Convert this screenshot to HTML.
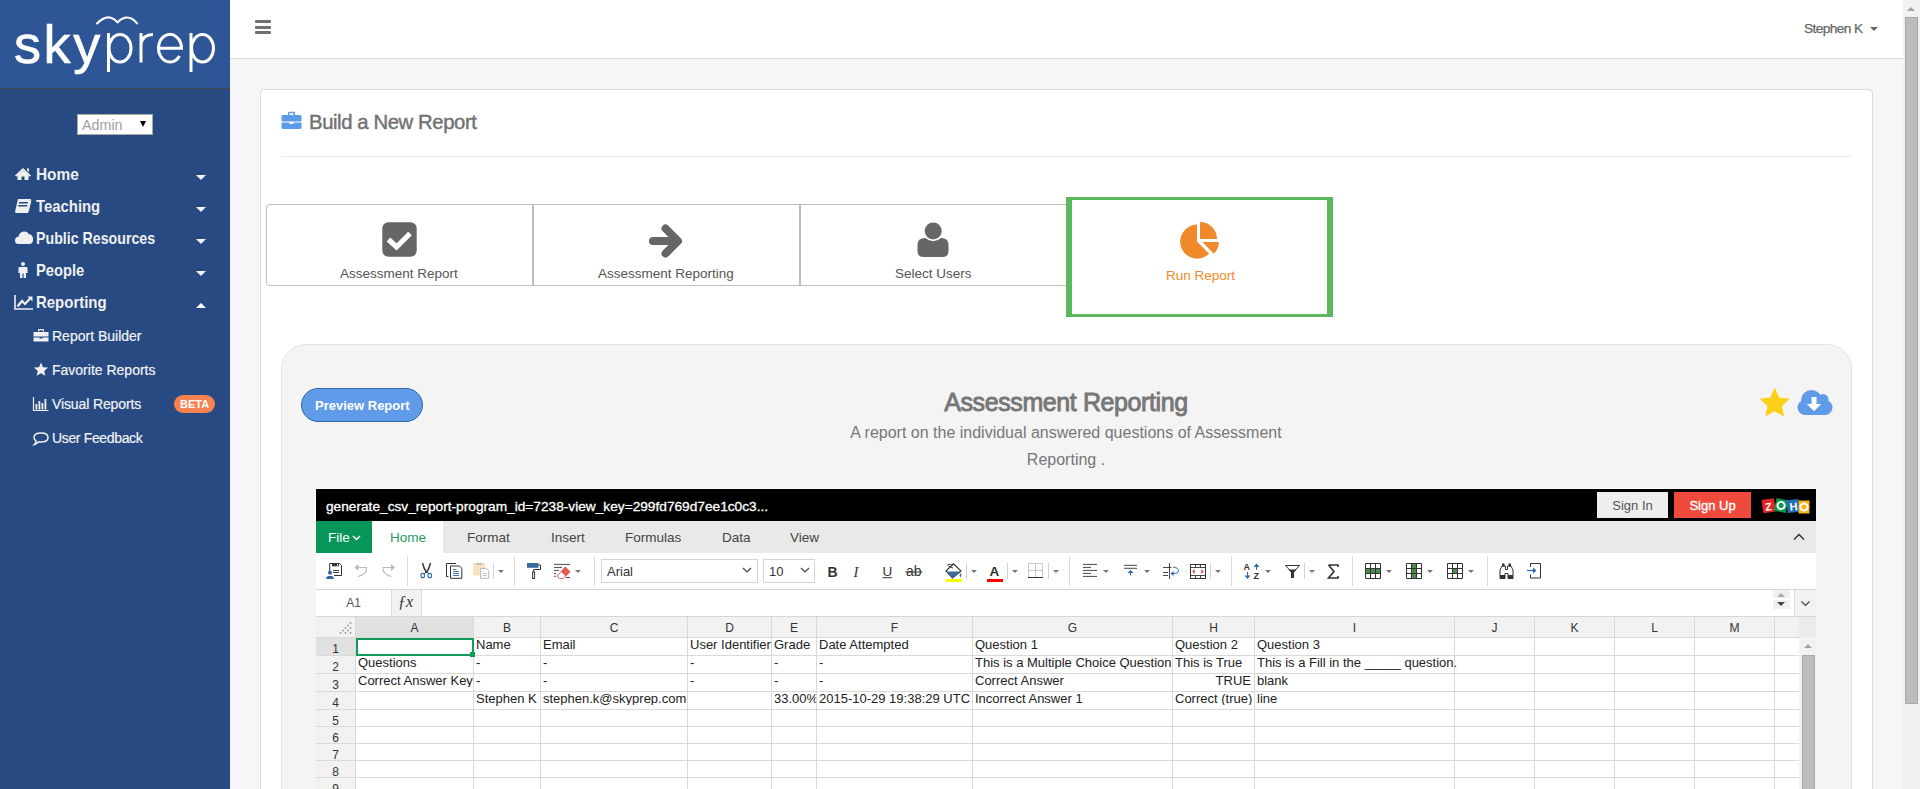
<!DOCTYPE html>
<html><head><meta charset="utf-8">
<style>
*{box-sizing:border-box;margin:0;padding:0}
html,body{width:1920px;height:789px;overflow:hidden;background:#f6f6f6;font-family:"Liberation Sans",sans-serif}
.a{position:absolute}
.t{position:absolute;white-space:nowrap;line-height:1}
#sb{left:0;top:0;width:230px;height:789px;background:#264a81}
#logo{left:0;top:0;width:230px;height:89px;background:#2e5696;border-bottom:1px solid #444}
.nav{color:#f0f0f0;font-weight:bold;font-size:17px}
.sub{color:#f2f2f2;font-size:14px;-webkit-text-stroke:0.2px #f2f2f2}
.car{width:0;height:0;border-left:5px solid transparent;border-right:5px solid transparent}
.dn{border-top:5px solid #f2f2f2}
.up{border-bottom:5px solid #fff}
#hdr{left:230px;top:0;width:1673px;height:59px;background:#fff;border-bottom:1px solid #d9d9d9}
#vscroll{left:1903px;top:0;width:17px;height:789px;background:#f1f1f1}
#panel{left:260px;top:89px;width:1613px;height:760px;background:#fff;border:1px solid #dadada;border-radius:4px}
</style></head><body>
<div id="sb" class="a">
  <div id="logo" class="a"></div>
  <svg class="a" style="left:0;top:0" width="230" height="88" viewBox="0 0 230 88">
    <text transform="translate(14,63)" font-family="Liberation Sans" font-size="54" letter-spacing="2.6" fill="#fff" stroke="#fff" stroke-width="0.7">sky</text>
    <g fill="none" stroke="#fff" stroke-width="3">
      <path d="M108.5,33 V72"/><ellipse cx="120" cy="48.3" rx="11" ry="13.8"/>
      <path d="M141,62.5 V33 M141,44 Q143,34.5 153,34.5"/>
      <path d="M158.5,48.3 H181.5 A11.5,13.8 0 1 0 179.5,56"/>
      <path d="M191,33 V72"/><ellipse cx="202.5" cy="48.3" rx="11" ry="13.8"/>
    </g>
    <path d="M97,23.5 Q104,16.5 110,17.5 Q114,18.5 117.6,22.3 Q121,18.5 126,17.5 Q132,17 137.2,23.5" fill="none" stroke="#fff" stroke-width="2" stroke-linecap="round"/>
  </svg>
  <div class="a" style="left:77px;top:114px;width:76px;height:21px;background:#fff;border:1px solid #a9a9a9"></div>
  <div class="t" style="left:82px;top:118px;font-size:14.3px;color:#a0a0a0">Admin</div>
  <div class="a car" style="left:140px;top:121px;border-left-width:3.5px;border-right-width:3.5px;border-top:6px solid #000"></div>

  <!-- nav icons -->
  <svg class="a" style="left:14px;top:166px" width="20" height="150" viewBox="0 0 20 150" fill="#f0f0f0">
    <!-- home -->
    <path d="M1,9.5 L9,2 L17,9.5 L15.8,10.7 L9,4.5 L2.2,10.7Z M3.5,9.5 L9,4.7 L14.5,9.5 V14 H10.5 V10.5 H7.5 V14 H3.5Z M13,2.5 H15 V6 L13,4.3Z"/>
    <!-- book -->
    <path d="M4,33 H17 L14,47 H2 Q0.5,46.5 1.3,44.5Z M5.2,36 H13.8 V37.5 H4.9Z M4.4,39 H13.2 V40.5 H4.1Z" fill-rule="evenodd"/>
    <path d="M2.5,45.5 H14.2 L17,34.5" fill="none" stroke="#f0f0f0" stroke-width="1"/>
    <!-- cloud -->
    <path d="M4.5,78 Q1,78 1,74.5 Q1,71 4.5,70.8 Q5,66.5 9.5,65.5 Q13.5,65 15,68.5 Q17,67.5 18,70 Q19.5,71 19,74.5 Q18.5,78 15,78Z"/>
    <!-- person -->
    <circle cx="9" cy="98" r="2"/>
    <path d="M5.5,101 H12.5 Q13.5,101 13.5,102 V107 H12 V112 H9.6 V107.5 H8.4 V112 H6 V107 H4.5 V102 Q4.5,101 5.5,101Z"/>
    <!-- chart -->
    <path d="M1,129 V143 H19" fill="none" stroke="#f0f0f0" stroke-width="1.6"/>
    <path d="M3.5,140.5 L8,135 L11,138 L17,131.5" fill="none" stroke="#f0f0f0" stroke-width="2.2"/>
    <path d="M13.5,130.5 H18.5 V135.5Z"/>
  </svg>
  <div class="t nav" style="left:36px;top:166px;transform:scaleX(0.905);transform-origin:0 0">Home</div>
  <div class="t nav" style="left:36px;top:198px;transform:scaleX(0.875);transform-origin:0 0">Teaching</div>
  <div class="t nav" style="left:36px;top:230px;transform:scaleX(0.835);transform-origin:0 0">Public Resources</div>
  <div class="t nav" style="left:36px;top:262px;transform:scaleX(0.865);transform-origin:0 0">People</div>
  <div class="t nav" style="left:36px;top:294px;transform:scaleX(0.88);transform-origin:0 0">Reporting</div>
  <div class="a car dn" style="left:196px;top:175px"></div>
  <div class="a car dn" style="left:196px;top:207px"></div>
  <div class="a car dn" style="left:196px;top:239px"></div>
  <div class="a car dn" style="left:196px;top:271px"></div>
  <div class="a car up" style="left:196px;top:303px"></div>

  <svg class="a" style="left:32px;top:326px" width="18" height="124" viewBox="0 0 18 124" fill="#f0f0f0">
    <!-- briefcase -->
    <g transform="translate(0,2.5)"><path d="M6,3 V1.5 Q6,0.5 7,0.5 H11 Q12,0.5 12,1.5 V3 H10.8 V1.8 H7.2 V3Z"/>
    <path d="M1.5,3.5 H16.5 V8 H1.5Z M1.5,9 H7.5 V10 H10.5 V9 H16.5 V13 H1.5Z"/></g>
    <!-- star -->
    <path d="M9,36.5 L11,41.2 L16,41.6 L12.2,44.9 L13.4,49.8 L9,47.2 L4.6,49.8 L5.8,44.9 L2,41.6 L7,41.2Z"/>
    <!-- bar chart -->
    <path d="M1.5,71 V84.5 H16.5" fill="none" stroke="#f0f0f0" stroke-width="1.2"/>
    <path d="M3.5,78 H5.3 V83.5 H3.5Z M6.5,75 H8.3 V83.5 H6.5Z M9.5,77 H11.3 V83.5 H9.5Z M12.5,73 H14.3 V83.5 H12.5Z"/>
    <!-- comment -->
    <path d="M9,107 Q16,107 16,111.5 Q16,116 9,116 Q7.5,116 6.5,115.7 Q4.5,118 2.5,118.5 Q4,117 4,114.8 Q2,113.5 2,111.5 Q2,107 9,107Z" fill="none" stroke="#f0f0f0" stroke-width="1.5"/>
  </svg>
  <div class="t sub" style="left:52px;top:329px">Report Builder</div>
  <div class="t sub" style="left:52px;top:363px">Favorite Reports</div>
  <div class="t sub" style="left:52px;top:397px;letter-spacing:-0.12px">Visual Reports</div>
  <div class="t sub" style="left:52px;top:431px;letter-spacing:-0.35px">User Feedback</div>
  <div class="a" style="left:174px;top:395px;width:41px;height:18px;border-radius:9px;background:#f5824f"></div>
  <div class="t" style="left:180px;top:399px;font-size:11px;font-weight:bold;color:#fff">BETA</div>
</div>
<div id="hdr" class="a"></div>
<div class="a" style="left:255px;top:20px;width:16px;height:3px;background:#707070;border-radius:1px"></div>
<div class="a" style="left:255px;top:26px;width:16px;height:3px;background:#707070;border-radius:1px"></div>
<div class="a" style="left:255px;top:31px;width:16px;height:3px;background:#707070;border-radius:1px"></div>
<div class="t" style="left:1804px;top:21.5px;font-size:13.7px;letter-spacing:-0.6px;-webkit-text-stroke:0.25px #666;color:#666">Stephen K</div>
<div class="a car" style="left:1870px;top:27px;border-left-width:4px;border-right-width:4px;border-top:4.5px solid #666"></div>
<div id="panel" class="a"></div>
<svg class="a" style="left:281px;top:111px" width="21" height="19" viewBox="0 0 21 19">
  <path d="M7,4 V2 Q7,0.8 8.2,0.8 H12.8 Q14,0.8 14,2 V4 H12.5 V2.3 H8.5 V4Z" fill="#5b9be8"/>
  <rect x="0.5" y="4" width="20" height="6.5" rx="1.5" fill="#5b9be8"/>
  <path d="M0.5,11.5 H8.5 V13 H12.5 V11.5 H20.5 V16.5 Q20.5,18 19,18 H2 Q0.5,18 0.5,16.5Z" fill="#5b9be8"/>
</svg>
<div class="t" style="left:309px;top:111.5px;font-size:20.3px;letter-spacing:-0.4px;-webkit-text-stroke:0.4px #707070;color:#707070">Build a New Report</div>
<div class="a" style="left:281px;top:156px;width:1571px;height:1px;background:#eeeeee"></div>

<div class="a" style="left:266px;top:204px;width:267px;height:82px;border:1px solid #bdbdbd;border-radius:4px 0 0 4px;background:#fff"></div>
<div class="a" style="left:533px;top:204px;width:267px;height:82px;border:1px solid #bdbdbd;background:#fff"></div>
<div class="a" style="left:800px;top:204px;width:267px;height:82px;border:1px solid #bdbdbd;background:#fff"></div>
<div class="a" style="left:1066px;top:197px;width:267px;height:120px;border-style:solid;border-color:#5cb85c;border-width:3px 6px;background:#fff"></div>

<svg class="a" style="left:382px;top:222px" width="35" height="35" viewBox="0 0 35 35">
  <rect x="0.3" y="0.3" width="34.4" height="34.4" rx="6" fill="#666"/>
  <path d="M6.5,17.5 L14.5,25 L28,11.5" fill="none" stroke="#fff" stroke-width="5.2" stroke-linejoin="miter" stroke-linecap="butt"/>
</svg>
<div class="t" style="left:340px;top:267px;font-size:13.5px;color:#555">Assessment Report</div>

<svg class="a" style="left:645px;top:220px" width="42" height="42" viewBox="645 220 42 42">
  <path d="M653,241 H675" fill="none" stroke="#666" stroke-width="8" stroke-linecap="round"/>
  <path d="M665.5,228.5 L678,241 L665.5,253.5" fill="none" stroke="#666" stroke-width="8" stroke-linecap="round" stroke-linejoin="round"/>
</svg>
<div class="t" style="left:598px;top:267px;font-size:13.5px;color:#555">Assessment Reporting</div>

<svg class="a" style="left:910px;top:218px" width="46" height="44" viewBox="910 218 46 44">
  <path d="M917.5,251 V245 Q917.5,238 925,238 H941 Q948.5,238 948.5,245 V251 Q948.5,257 942.5,257 H923.5 Q917.5,257 917.5,251Z" fill="#666"/>
  <circle cx="933.2" cy="231.1" r="10.2" fill="#fff"/>
  <circle cx="933.2" cy="231.1" r="8.5" fill="#666"/>
</svg>
<div class="t" style="left:895px;top:267px;font-size:13.5px;color:#555">Select Users</div>

<svg class="a" style="left:1175px;top:218px" width="50" height="44" viewBox="1175 218 50 44">
  <path d="M1197,241.6 L1209.1,253.7 A17,17 0 1 1 1197,224.6Z" fill="#f0892a"/>
  <path d="M1200,239 V222 A17,17 0 0 1 1217,239Z" fill="#f0892a"/>
  <path d="M1202.3,242 H1218.8 A16.5,16.5 0 0 1 1213.9,253.7Z" fill="#f0892a"/>
</svg>
<div class="t" style="left:1166px;top:269px;font-size:13.5px;color:#f0892a">Run Report</div>

<div class="a" style="left:281px;top:344px;width:1571px;height:600px;background:#f4f4f4;border:1px solid #e3e3e3;border-radius:25px"></div>
<div class="a" style="left:301px;top:388px;width:122px;height:34px;border-radius:17px;background:#5f9be8;border:1px solid #2e6aa6"></div>
<div class="t" style="left:315px;top:399px;font-size:13px;font-weight:bold;color:#fff">Preview Report</div>
<div class="t" style="left:0;top:390px;width:2132px;text-align:center;font-size:25px;letter-spacing:-0.4px;-webkit-text-stroke:0.9px #777;color:#777">Assessment Reporting</div>
<div class="a" style="left:766px;top:419px;width:600px;text-align:center;font-size:16px;line-height:27px;color:#777;white-space:nowrap">A report on the individual answered questions of Assessment<br>Reporting .</div>
<svg class="a" style="left:1758px;top:386px" width="80" height="32" viewBox="1758 386 80 32">
  <path d="M1774.7,387.8 L1779.2,397.4 L1789.7,398.7 L1782.0,406.0 L1784.0,416.4 L1774.7,411.3 L1765.4,416.4 L1767.4,406.0 L1759.7,398.7 L1770.2,397.4Z" fill="#fdcf16"/>
  <g fill="#5f9be8"><circle cx="1805" cy="407.5" r="7.5"/><circle cx="1811.5" cy="400.5" r="10.5"/><circle cx="1823" cy="399.5" r="5.5"/><circle cx="1825" cy="407.5" r="7.5"/><rect x="1805" y="400" width="20" height="15"/></g>
  <path d="M1811.6,397 H1816.5 V404 H1821.2 L1814.1,411.2 L1806.8,404 H1811.6Z" fill="#fff"/>
</svg>
<div class="a" style="left:315px;top:488px;width:1501px;height:65px;background:#fbfbfb"></div><div class="a" style="left:316px;top:553px;width:1500px;height:236px;background:#fff"></div>
<div class="a" style="left:316px;top:489px;width:1500px;height:32px;background:#000"></div>
<div class="t" style="left:326px;top:500px;font-size:13.7px;color:#fff;-webkit-text-stroke:0.3px #fff">generate_csv_report-program_id=7238-view_key=299fd769d7ee1c0c3...</div>
<div class="a" style="left:1597px;top:492px;width:71px;height:26px;background:#eeeeee"></div>
<div class="t" style="left:1597px;top:499px;width:71px;text-align:center;font-size:13px;color:#555">Sign In</div>
<div class="a" style="left:1674px;top:492px;width:77px;height:26px;background:#ef4a3b"></div>
<div class="t" style="left:1674px;top:499px;width:77px;text-align:center;font-size:13px;color:#fff;-webkit-text-stroke:0.35px #fff">Sign Up</div>
<svg class="a" style="left:1760px;top:495px" width="52" height="22" viewBox="0 0 52 22">
<g transform="rotate(-8 8.5 11)"><rect x="2.5" y="4" width="12.5" height="13.5" fill="#e42527"/><text x="5" y="15.5" font-size="11" font-weight="bold" fill="#fff" font-family="Liberation Sans">Z</text></g>
<g transform="rotate(12 21 11)"><rect x="15" y="4" width="12" height="13" fill="#089949"/><circle cx="21" cy="10.5" r="3.6" fill="none" stroke="#fff" stroke-width="2"/></g>
<g transform="rotate(-6 33 11)"><rect x="27" y="4.5" width="12" height="13" fill="#226db4"/><text x="29.5" y="15.5" font-size="11" font-weight="bold" fill="#fff" font-family="Liberation Sans">H</text></g>
<rect x="38.5" y="5.5" width="11" height="13" fill="#f9b21d"/><circle cx="44" cy="12" r="3.6" fill="none" stroke="#fff" stroke-width="2"/>
</svg>
<div class="a" style="left:316px;top:521px;width:1500px;height:32px;background:#e9e9e9"></div>
<div class="a" style="left:316px;top:521px;width:56px;height:32px;background:#07965a"></div>
<div class="t" style="left:328px;top:531px;font-size:13.5px;color:#fff">File</div>
<svg class="a" style="left:352px;top:535px" width="9" height="6" viewBox="0 0 9 6"><path d="M1,1 L4.5,4.5 L8,1" fill="none" stroke="#fff" stroke-width="1.5"/></svg>
<div class="a" style="left:372px;top:521px;width:71px;height:32px;background:#fff"></div>
<div class="t" style="left:390px;top:531px;font-size:13.5px;color:#1e9c63">Home</div>
<div class="t" style="left:467px;top:531px;font-size:13.5px;color:#444">Format</div>
<div class="t" style="left:551px;top:531px;font-size:13.5px;color:#444">Insert</div>
<div class="t" style="left:625px;top:531px;font-size:13.5px;color:#444">Formulas</div>
<div class="t" style="left:722px;top:531px;font-size:13.5px;color:#444">Data</div>
<div class="t" style="left:790px;top:531px;font-size:13.5px;color:#444">View</div>
<svg class="a" style="left:1793px;top:533px" width="12" height="8" viewBox="0 0 12 8"><path d="M1,6.5 L6,1.5 L11,6.5" fill="none" stroke="#333" stroke-width="1.5"/></svg>
<svg class="a" style="left:316px;top:553px" width="1500" height="36" viewBox="316 553 1500 36">
<path d="M329.7,571 V563.5 H339.5 L341.5,565.5 V575.5 H334" fill="none" stroke="#333" stroke-width="1"/>
<rect x="332" y="563.5" width="7" height="2.8" fill="#333"/><rect x="337" y="564" width="1" height="1.8" fill="#fff"/>
<path d="M333,570.5 H339 M333,572.5 H339" stroke="#333" stroke-width="0.9"/>
<circle cx="330" cy="572.8" r="2" fill="#2e6aa6"/><path d="M326,579 Q326.5,576 328.5,576 H331.5 Q333.5,576 334,579Z" fill="#2e6aa6"/>
<path d="M358,567.5 H366.5 Q367.5,574 358,576.5" fill="none" stroke="#bbb" stroke-width="1.1"/><path d="M354.5,567.5 L358.5,564 V571Z" fill="#bbb"/>
<path d="M391.5,567.5 H383 Q382,574 391.5,576.5" fill="none" stroke="#bbb" stroke-width="1.1"/><path d="M395,567.5 L391,564 V571Z" fill="#bbb"/>
<path d="M407.5,556 V586" stroke="#dcdcdc" stroke-width="1"/>
<path d="M422.5,563 Q424,569 426.5,572.5 M430.5,563 Q429,569 426.5,572.5" fill="none" stroke="#333" stroke-width="1.4"/>
<path d="M426.5,572 L423.5,574 M426.5,572 L429.5,574" stroke="#333" stroke-width="1"/>
<ellipse cx="422.7" cy="575.5" rx="1.8" ry="2.3" fill="none" stroke="#2e6aa6" stroke-width="1.1"/><ellipse cx="429.8" cy="575.5" rx="1.8" ry="2.3" fill="none" stroke="#2e6aa6" stroke-width="1.1"/>
<path d="M456,563.5 H446.5 V576.5 H448.5" fill="none" stroke="#333" stroke-width="1"/>
<path d="M450.5,566 H459.5 L461.8,568.3 V578.3 H450.5Z" fill="#fff" stroke="#333" stroke-width="1"/>
<path d="M453,569.5 H456.5 M453,571.5 H459 M453,573.5 H459 M453,575.5 H459" stroke="#2e6aa6" stroke-width="0.9"/>
<rect x="473" y="563" width="12" height="12.5" fill="#f5e3c0"/><rect x="476" y="563" width="6" height="1.8" fill="#bbb"/>
<path d="M480.5,568.5 H486.5 L488.7,570.7 V578.3 H480.5Z" fill="#fff" stroke="#bbb" stroke-width="1"/>
<path d="M482.5,571.5 H484 M482.5,573.5 H487 M482.5,575.5 H487" stroke="#a8c0dc" stroke-width="0.8"/>
<path d="M493.5,563 V579" stroke="#d0d0d0" stroke-width="1"/>
<path d="M498,570 H504 L501,573Z" fill="#777"/>
<path d="M514.5,556 V586" stroke="#dcdcdc" stroke-width="1"/>
<rect x="527" y="563" width="11.5" height="4.8" fill="#3a6aa0"/>
<path d="M538.5,565 H540.5 V569.5 H533.6 V572" fill="none" stroke="#333" stroke-width="1"/><rect x="532.6" y="572" width="2" height="6.5" fill="#fff" stroke="#333" stroke-width="1"/>
<path d="M554,564.4 H570 M554,567.4 H562 M554,570.4 H559 M554,573.4 H556 M554,576.2 H556 M566,577.5 H570" stroke="#333" stroke-width="0.9"/>
<path d="M565.3,567 L570,571.7 L563,578.7 H559.5 L557,576.2 Z" fill="#fff" stroke="#e05a4f" stroke-width="1"/><path d="M565.3,567 L570,571.7 L565.5,576.2 L561,571.5Z" fill="#e05a4f"/>
<path d="M575,570 H581 L578,573Z" fill="#777"/>
<path d="M594.5,556 V586" stroke="#dcdcdc" stroke-width="1"/>
</svg>
<div class="a" style="left:601px;top:559px;width:157px;height:24px;border:1px solid #d6d6d6;background:#fff"></div>
<div class="t" style="left:607px;top:565px;font-size:13px;color:#333">Arial</div>
<svg class="a" style="left:742px;top:567px" width="10" height="7" viewBox="0 0 10 7"><path d="M1,1 L5,5 L9,1" fill="none" stroke="#444" stroke-width="1.2"/></svg>
<div class="a" style="left:763px;top:559px;width:52px;height:24px;border:1px solid #d6d6d6;background:#fff"></div>
<div class="t" style="left:769px;top:565px;font-size:13px;color:#333">10</div>
<svg class="a" style="left:800px;top:567px" width="10" height="7" viewBox="0 0 10 7"><path d="M1,1 L5,5 L9,1" fill="none" stroke="#444" stroke-width="1.2"/></svg>
<svg class="a" style="left:816px;top:553px" width="1000" height="36" viewBox="816 553 1000 36">
<text x="827.5" y="576.5" font-family="Liberation Sans" font-weight="bold" font-size="14" fill="#333">B</text>
<text x="853.5" y="576.5" font-family="Liberation Serif" font-style="italic" font-size="14.5" fill="#333">I</text>
<text x="882.5" y="575.5" font-family="Liberation Sans" font-size="13.5" fill="#333">U</text><path d="M882.5,577.7 H892" stroke="#333" stroke-width="1"/>
<text x="906" y="576" font-family="Liberation Sans" font-size="14" fill="#333">ab</text><path d="M905.5,572 H922.5" stroke="#333" stroke-width="1"/>
<path d="M946,571 L953.5,563.8 L961,571 L952.5,578Z" fill="#fff" stroke="#333" stroke-width="1.1"/><path d="M946.8,571.5 H960.3 L952.5,578Z" fill="#3a6aa0"/>
<path d="M953,568 Q947,566 948,564.5 Q950,563.5 953,565.5" fill="none" stroke="#333" stroke-width="0.9"/>
<path d="M960.5,573 Q962.3,575.5 960.5,577.3 Q958.7,575.5 960.5,573Z" fill="#3a6aa0"/>
<rect x="946" y="579" width="16" height="3" fill="#ffff00"/>
<path d="M966.5,563 V579" stroke="#d0d0d0" stroke-width="1"/>
<path d="M971,570 H977 L974,573Z" fill="#777"/>
<text x="989.5" y="576" font-family="Liberation Sans" font-weight="bold" font-size="13.5" fill="#333">A</text><rect x="987" y="579" width="16" height="3" fill="#ff0000"/>
<path d="M1007.5,563 V579" stroke="#d0d0d0" stroke-width="1"/>
<path d="M1012,570 H1018 L1015,573Z" fill="#777"/>
<path d="M1028.5,577 V563.5 H1042.5 V577 M1035.5,563.5 V577 M1028.5,570.5 H1042.5" fill="none" stroke="#c8c8c8" stroke-width="1"/><path d="M1028,577.5 H1043" stroke="#333" stroke-width="1"/>
<path d="M1048.5,563 V579" stroke="#d0d0d0" stroke-width="1"/>
<path d="M1053,570 H1059 L1056,573Z" fill="#777"/>
<path d="M1069.5,556 V586" stroke="#dcdcdc" stroke-width="1"/>
<path d="M1083,564.4 H1097 M1083,567.4 H1091 M1083,570.4 H1097 M1083,573.4 H1091 M1083,576.4 H1097" stroke="#333" stroke-width="0.9"/>
<path d="M1103,570 H1109 L1106,573Z" fill="#777"/>
<path d="M1124,565.3 H1137 M1124,568.3 H1137" stroke="#333" stroke-width="0.9"/><path d="M1130.5,575.5 V572.5" stroke="#2e6aa6" stroke-width="1.1"/><path d="M1127.5,573 L1130.5,570 L1133.5,573Z" fill="#2e6aa6"/>
<path d="M1144,570 H1150 L1147,573Z" fill="#777"/>
<path d="M1169.5,563 V579 M1163,567.5 H1171.5 M1163,572.5 H1168 M1163,575.5 H1168" stroke="#333" stroke-width="0.9"/>
<path d="M1173,567 Q1178.5,567.5 1178.5,571 Q1178.5,573.5 1173,573.5" fill="none" stroke="#2e6aa6" stroke-width="1"/><path d="M1170.5,573.5 L1173.5,571 V576Z" fill="#2e6aa6"/>
<rect x="1190.5" y="564.5" width="15" height="14" fill="#fff" stroke="#333" stroke-width="1"/><path d="M1190.5,567.5 H1205.5 M1190.5,575.5 H1205.5 M1195.5,564.5 V567.5 M1200.5,564.5 V567.5 M1195.5,575.5 V578.5 M1200.5,575.5 V578.5" stroke="#333" stroke-width="0.9"/>
<path d="M1192,571.5 L1194.8,569 V574Z M1204,571.5 L1201.2,569 V574Z" fill="#e05a4f"/>
<path d="M1210.5,563 V579" stroke="#d0d0d0" stroke-width="1"/>
<path d="M1215,570 H1221 L1218,573Z" fill="#777"/>
<path d="M1231.5,556 V586" stroke="#dcdcdc" stroke-width="1"/>
<text x="1243.5" y="570" font-family="Liberation Sans" font-weight="bold" font-size="9" fill="#333">A</text><text x="1253.5" y="579" font-family="Liberation Sans" font-weight="bold" font-size="9" fill="#333">Z</text>
<path d="M1256.5,570 V566" stroke="#2e6aa6" stroke-width="1"/><path d="M1253.5,567 L1256.5,563.5 L1259.5,567Z" fill="#2e6aa6"/>
<path d="M1247.5,572 V576" stroke="#2e6aa6" stroke-width="1"/><path d="M1244.5,575.5 L1247.5,579 L1250.5,575.5Z" fill="#2e6aa6"/>
<path d="M1265,570 H1271 L1268,573Z" fill="#777"/>
<path d="M1285.5,565.5 H1299.5 L1294,571.5 H1291Z" fill="none" stroke="#333" stroke-width="1"/><path d="M1288.5,569.5 H1296.5 L1294,572.5 V578 H1291 V572.5Z" fill="#333"/>
<path d="M1304.5,563 V579" stroke="#d0d0d0" stroke-width="1"/>
<path d="M1309,570 H1315 L1312,573Z" fill="#777"/>
<path d="M1328.5,565 H1338 V567 M1328.5,565 L1334,571.5 L1328.5,578 H1338 V576" fill="none" stroke="#333" stroke-width="1.6"/>
<path d="M1352.5,556 V586" stroke="#dcdcdc" stroke-width="1"/>
<rect x="1365" y="563" width="16" height="16" fill="#fff"/><rect x="1365" y="568" width="6" height="6" fill="#4e8a4e"/><rect x="1370" y="568" width="6" height="6" fill="#4e8a4e"/><rect x="1375" y="568" width="6" height="6" fill="#4e8a4e"/><path d="M1365.5,563.5 H1380.5 V578.5 H1365.5Z M1370.5,563.5 V578.5 M1375.5,563.5 V578.5 M1365.5,568.5 H1380.5 M1365.5,573.5 H1380.5" fill="none" stroke="#333" stroke-width="1"/>
<path d="M1386,570 H1392 L1389,573Z" fill="#777"/>
<rect x="1406" y="563" width="16" height="16" fill="#fff"/><rect x="1411" y="563" width="6" height="6" fill="#4e8a4e"/><rect x="1411" y="568" width="6" height="6" fill="#4e8a4e"/><rect x="1411" y="573" width="6" height="6" fill="#4e8a4e"/><path d="M1406.5,563.5 H1421.5 V578.5 H1406.5Z M1411.5,563.5 V578.5 M1416.5,563.5 V578.5 M1406.5,568.5 H1421.5 M1406.5,573.5 H1421.5" fill="none" stroke="#333" stroke-width="1"/>
<path d="M1427,570 H1433 L1430,573Z" fill="#777"/>
<rect x="1447" y="563" width="16" height="16" fill="#fff"/><rect x="1452" y="568" width="6" height="6" fill="#4e8a4e"/><path d="M1447.5,563.5 H1462.5 V578.5 H1447.5Z M1452.5,563.5 V578.5 M1457.5,563.5 V578.5 M1447.5,568.5 H1462.5 M1447.5,573.5 H1462.5" fill="none" stroke="#333" stroke-width="1"/>
<path d="M1468,570 H1474 L1471,573Z" fill="#777"/>
<path d="M1487.5,556 V586" stroke="#dcdcdc" stroke-width="1"/>
<path d="M1500,578.5 V570 L1502,566 H1505.5 V569.5 H1507.5 V566 H1511 L1513,570 V578.5 H1508 V573.5 H1505 V578.5Z" fill="none" stroke="#333" stroke-width="1"/>
<rect x="1502" y="563.5" width="2.5" height="3" fill="#333"/><rect x="1508.5" y="563.5" width="2.5" height="3" fill="#333"/><rect x="1500" y="575" width="5" height="4" fill="#333"/><rect x="1508" y="575" width="5" height="4" fill="#333"/>
<path d="M1530.5,567 V563.5 H1540.5 V578 H1530.5 V574.5" fill="none" stroke="#333" stroke-width="1"/><path d="M1527,570.5 H1533" stroke="#2e6aa6" stroke-width="1.2"/><path d="M1533,567.5 L1536.5,570.5 L1533,573.5Z" fill="#2e6aa6"/>
</svg>
<div class="a" style="left:316px;top:589px;width:1500px;height:1px;background:#d6d6d6"></div>
<div class="a" style="left:391px;top:590px;width:1px;height:27px;background:#dcdcdc"></div>
<div class="a" style="left:392px;top:590px;width:30px;height:26px;background:#f2f2f2;border-right:1px solid #dcdcdc"></div>
<div class="t" style="left:316px;top:597px;width:75px;text-align:center;font-size:12px;color:#555">A1</div>
<div class="t" style="left:398px;top:594px;font-size:16px;font-style:italic;font-family:'Liberation Serif',serif;color:#333">&#402;x</div>
<div class="a" style="left:1773px;top:590px;width:17px;height:8px;background:#f0f0f0"></div><div class="a" style="left:1773px;top:600px;width:17px;height:9px;background:#f0f0f0"></div>
<div class="a car" style="left:1777px;top:592.5px;border-left-width:4px;border-right-width:4px;border-bottom:4px solid #aaa"></div>
<div class="a car" style="left:1777px;top:601.5px;border-left-width:4px;border-right-width:4px;border-top:4px solid #444"></div>
<div class="a" style="left:1794px;top:590px;width:1px;height:27px;background:#dcdcdc"></div>
<div class="a" style="left:1795px;top:590px;width:21px;height:27px;background:#f2f2f2"></div>
<svg class="a" style="left:1800px;top:600px" width="11" height="7" viewBox="0 0 11 7"><path d="M1.5,1.5 L5.5,5.5 L9.5,1.5" fill="none" stroke="#444" stroke-width="1.2"/></svg>
<div class="a" style="left:316px;top:616px;width:1500px;height:1px;background:#d6d6d6"></div>
<div class="a" style="left:316px;top:617px;width:1483px;height:20px;background:#f2f2f2"></div>
<div class="a" style="left:316px;top:637px;width:39px;height:152px;background:#f2f2f2"></div>
<div class="a" style="left:356px;top:617px;width:117px;height:20px;background:#e1e1e1"></div>
<div class="a" style="left:316px;top:638px;width:39px;height:17px;background:#e1e1e1"></div>
<div class="a" style="left:1799px;top:617px;width:17px;height:172px;background:#f2f2f2"></div><div class="a" style="left:1799px;top:617px;width:17px;height:20px;background:#ebebeb"></div>
<svg class="a" style="left:336px;top:619px" width="18" height="17" viewBox="336 619 18 17" fill="#999"><circle cx="350.5" cy="623" r="0.9"/><circle cx="348" cy="625.5" r="0.9"/><circle cx="345.5" cy="628" r="0.9"/><circle cx="350.5" cy="628" r="0.9"/><circle cx="343" cy="630.5" r="0.9"/><circle cx="348" cy="630.5" r="0.9"/><circle cx="340.5" cy="633" r="0.9"/><circle cx="345.5" cy="633" r="0.9"/><circle cx="350.5" cy="633" r="0.9"/></svg>
<div class="a" style="left:355px;top:617px;width:1px;height:172px;background:#d9d9d9"></div>
<div class="a" style="left:473px;top:617px;width:1px;height:172px;background:#d9d9d9"></div>
<div class="a" style="left:540px;top:617px;width:1px;height:172px;background:#d9d9d9"></div>
<div class="a" style="left:687px;top:617px;width:1px;height:172px;background:#d9d9d9"></div>
<div class="a" style="left:771px;top:617px;width:1px;height:172px;background:#d9d9d9"></div>
<div class="a" style="left:816px;top:617px;width:1px;height:172px;background:#d9d9d9"></div>
<div class="a" style="left:972px;top:617px;width:1px;height:172px;background:#d9d9d9"></div>
<div class="a" style="left:1172px;top:617px;width:1px;height:172px;background:#d9d9d9"></div>
<div class="a" style="left:1254px;top:617px;width:1px;height:172px;background:#d9d9d9"></div>
<div class="a" style="left:1454px;top:617px;width:1px;height:172px;background:#d9d9d9"></div>
<div class="a" style="left:1534px;top:617px;width:1px;height:172px;background:#d9d9d9"></div>
<div class="a" style="left:1614px;top:617px;width:1px;height:172px;background:#d9d9d9"></div>
<div class="a" style="left:1694px;top:617px;width:1px;height:172px;background:#d9d9d9"></div>
<div class="a" style="left:1774px;top:617px;width:1px;height:172px;background:#d9d9d9"></div>
<div class="a" style="left:316px;top:637px;width:1483px;height:1px;background:#d9d9d9"></div>
<div class="a" style="left:316px;top:655px;width:1483px;height:1px;background:#d9d9d9"></div>
<div class="a" style="left:316px;top:673px;width:1483px;height:1px;background:#d9d9d9"></div>
<div class="a" style="left:316px;top:691px;width:1483px;height:1px;background:#d9d9d9"></div>
<div class="a" style="left:316px;top:709px;width:1483px;height:1px;background:#d9d9d9"></div>
<div class="a" style="left:316px;top:726px;width:1483px;height:1px;background:#d9d9d9"></div>
<div class="a" style="left:316px;top:743px;width:1483px;height:1px;background:#d9d9d9"></div>
<div class="a" style="left:316px;top:760px;width:1483px;height:1px;background:#d9d9d9"></div>
<div class="a" style="left:316px;top:777px;width:1483px;height:1px;background:#d9d9d9"></div>
<div class="t" style="left:356px;top:622px;width:117px;text-align:center;font-size:12px;color:#333">A</div>
<div class="t" style="left:474px;top:622px;width:66px;text-align:center;font-size:12px;color:#333">B</div>
<div class="t" style="left:541px;top:622px;width:146px;text-align:center;font-size:12px;color:#333">C</div>
<div class="t" style="left:688px;top:622px;width:83px;text-align:center;font-size:12px;color:#333">D</div>
<div class="t" style="left:772px;top:622px;width:44px;text-align:center;font-size:12px;color:#333">E</div>
<div class="t" style="left:817px;top:622px;width:155px;text-align:center;font-size:12px;color:#333">F</div>
<div class="t" style="left:973px;top:622px;width:199px;text-align:center;font-size:12px;color:#333">G</div>
<div class="t" style="left:1173px;top:622px;width:81px;text-align:center;font-size:12px;color:#333">H</div>
<div class="t" style="left:1255px;top:622px;width:199px;text-align:center;font-size:12px;color:#333">I</div>
<div class="t" style="left:1455px;top:622px;width:79px;text-align:center;font-size:12px;color:#333">J</div>
<div class="t" style="left:1535px;top:622px;width:79px;text-align:center;font-size:12px;color:#333">K</div>
<div class="t" style="left:1615px;top:622px;width:79px;text-align:center;font-size:12px;color:#333">L</div>
<div class="t" style="left:1695px;top:622px;width:79px;text-align:center;font-size:12px;color:#333">M</div>
<div class="t" style="left:316px;top:643px;width:39px;text-align:center;font-size:12px;color:#333">1</div>
<div class="t" style="left:316px;top:661px;width:39px;text-align:center;font-size:12px;color:#333">2</div>
<div class="t" style="left:316px;top:679px;width:39px;text-align:center;font-size:12px;color:#333">3</div>
<div class="t" style="left:316px;top:697px;width:39px;text-align:center;font-size:12px;color:#333">4</div>
<div class="t" style="left:316px;top:715px;width:39px;text-align:center;font-size:12px;color:#333">5</div>
<div class="t" style="left:316px;top:732px;width:39px;text-align:center;font-size:12px;color:#333">6</div>
<div class="t" style="left:316px;top:749px;width:39px;text-align:center;font-size:12px;color:#333">7</div>
<div class="t" style="left:316px;top:766px;width:39px;text-align:center;font-size:12px;color:#333">8</div>
<div class="t" style="left:316px;top:783px;width:39px;text-align:center;font-size:12px;color:#333">9</div>
<div class="a" style="left:356px;top:638px;width:118px;height:18px;border:2px solid #109b5b"></div>
<div class="a" style="left:470px;top:652px;width:5px;height:5px;background:#109b5b;border:0"></div>
<div class="t" style="left:476px;top:638px;font-size:13px;color:#222">Name</div>
<div class="t" style="left:543px;top:638px;font-size:13px;color:#222">Email</div>
<div class="t" style="left:690px;top:638px;width:81px;overflow:hidden;font-size:13px;color:#222">User Identifier</div>
<div class="t" style="left:774px;top:638px;font-size:13px;color:#222">Grade</div>
<div class="t" style="left:819px;top:638px;font-size:13px;color:#222">Date Attempted</div>
<div class="t" style="left:975px;top:638px;font-size:13px;color:#222">Question 1</div>
<div class="t" style="left:1175px;top:638px;font-size:13px;color:#222">Question 2</div>
<div class="t" style="left:1257px;top:638px;font-size:13px;color:#222">Question 3</div>
<div class="t" style="left:358px;top:656px;font-size:13px;color:#222">Questions</div>
<div class="t" style="left:476px;top:656px;font-size:13px;color:#222">-</div>
<div class="t" style="left:543px;top:656px;font-size:13px;color:#222">-</div>
<div class="t" style="left:690px;top:656px;font-size:13px;color:#222">-</div>
<div class="t" style="left:774px;top:656px;font-size:13px;color:#222">-</div>
<div class="t" style="left:819px;top:656px;font-size:13px;color:#222">-</div>
<div class="t" style="left:975px;top:656px;width:197px;overflow:hidden;font-size:13px;color:#222">This is a Multiple Choice Question</div>
<div class="t" style="left:1175px;top:656px;font-size:13px;color:#222">This is True</div>
<div class="t" style="left:1257px;top:656px;font-size:13px;color:#222">This is a Fill in the _____ question.</div>
<div class="t" style="left:358px;top:674px;width:115px;overflow:hidden;font-size:13px;color:#222">Correct Answer Key</div>
<div class="t" style="left:476px;top:674px;font-size:13px;color:#222">-</div>
<div class="t" style="left:543px;top:674px;font-size:13px;color:#222">-</div>
<div class="t" style="left:690px;top:674px;font-size:13px;color:#222">-</div>
<div class="t" style="left:774px;top:674px;font-size:13px;color:#222">-</div>
<div class="t" style="left:819px;top:674px;font-size:13px;color:#222">-</div>
<div class="t" style="left:975px;top:674px;font-size:13px;color:#222">Correct Answer</div>
<div class="t" style="left:1172px;top:674px;width:79px;text-align:right;font-size:13px;color:#222">TRUE</div>
<div class="t" style="left:1257px;top:674px;font-size:13px;color:#222">blank</div>
<div class="t" style="left:476px;top:692px;font-size:13px;color:#222">Stephen K</div>
<div class="t" style="left:543px;top:692px;width:147px;overflow:hidden;font-size:13px;color:#222">stephen.k@skyprep.com</div>
<div class="t" style="left:774px;top:692px;width:42px;overflow:hidden;font-size:13px;color:#222">33.00%</div>
<div class="t" style="left:819px;top:692px;font-size:13px;color:#222">2015-10-29 19:38:29 UTC</div>
<div class="t" style="left:975px;top:692px;font-size:13px;color:#222">Incorrect Answer 1</div>
<div class="t" style="left:1175px;top:692px;width:82px;overflow:hidden;font-size:13px;color:#222">Correct (true)</div>
<div class="t" style="left:1257px;top:692px;font-size:13px;color:#222">line</div>
<div class="a car" style="left:1804px;top:644px;border-left-width:4px;border-right-width:4px;border-bottom:4px solid #a3a3a3"></div>
<div class="a" style="left:1802px;top:655px;width:13px;height:140px;background:#bcbcbc;border:1px solid #a8a8a8"></div>
<div id="vscroll" class="a"></div>
<div class="a" style="left:1905px;top:17px;width:13px;height:687px;background:#bcbcbc;border:1px solid #a8a8a8"></div>
<div class="a car" style="left:1907px;top:7px;border-left-width:4px;border-right-width:4px;border-bottom:4px solid #a3a3a3"></div>
</body></html>
